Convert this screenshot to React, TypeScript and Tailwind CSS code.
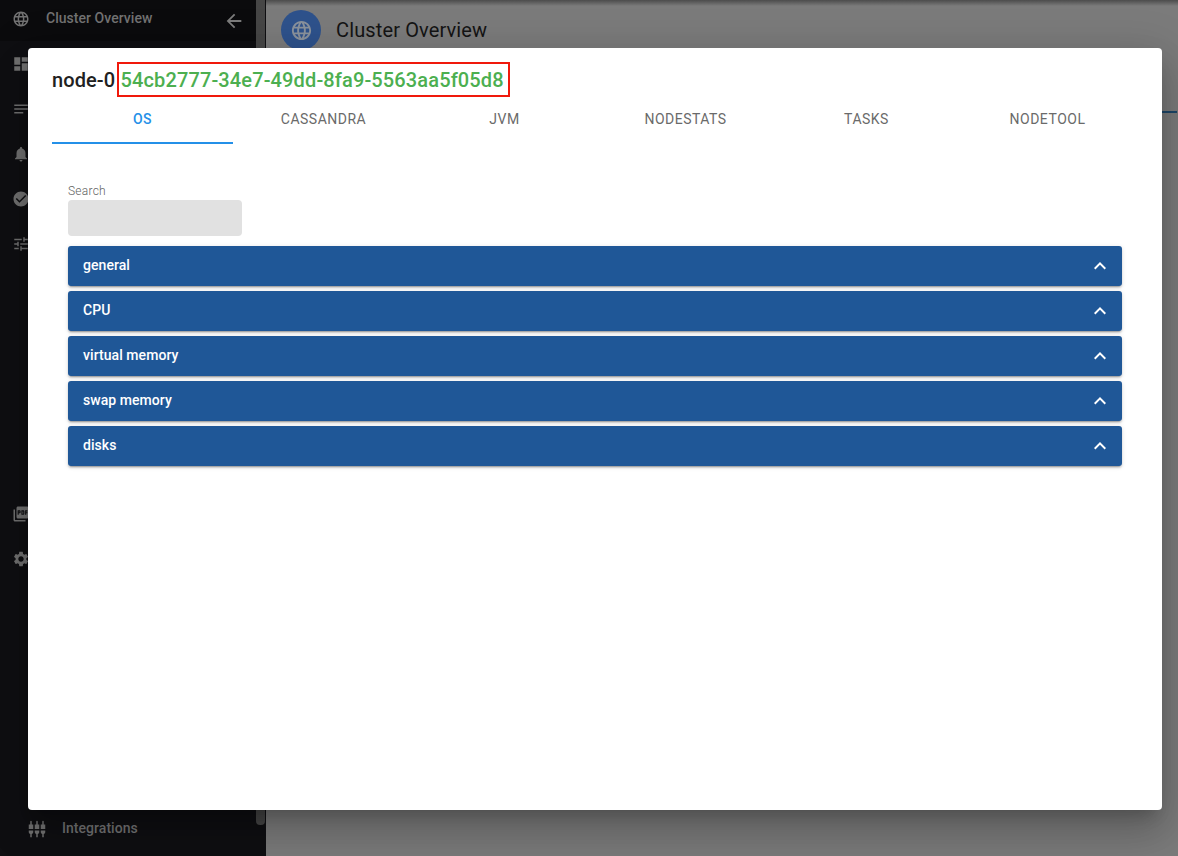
import React from "react";
import type { IconType } from "react-icons";
import {
  MdArrowBack,
  MdCheckCircle,
  MdDashboard,
  MdExpandLess,
  MdLanguage,
  MdNotes,
  MdNotifications,
  MdPictureAsPdf,
  MdSettings,
  MdSettingsInputComponent,
  MdTune,
} from "react-icons/md";

const topItems: IconType[] = [MdDashboard, MdNotes, MdNotifications, MdCheckCircle, MdTune];
const lowerItems: IconType[] = [MdPictureAsPdf, MdSettings];
const tabs = ["OS", "CASSANDRA", "JVM", "NODESTATS", "TASKS", "NODETOOL"];
const sections = ["general", "CPU", "virtual memory", "swap memory", "disks"];

function NavIcon({ icon: Icon }: { icon: IconType }) {
  return (
    <div className="flex h-[45px] items-center pl-3">
      <Icon size={18} />
    </div>
  );
}

function Sidebar() {
  return (
    <aside className="flex h-full w-[266px] shrink-0 bg-[#0f0f12] text-[#727272]">
      <nav className="flex w-64 flex-col">
        <div className="flex h-[41px] items-start bg-[#0b0b0d] pl-3">
          <MdLanguage size={18} className="mt-[10px]" />
          <span className="ml-4 mt-2 text-sm leading-5 font-medium tracking-[0.04px]">Cluster Overview</span>
          <MdArrowBack size={22} className="mt-[10px] mr-[11px] ml-auto text-[#7c7c7c]" />
        </div>
        {topItems.map((icon, i) => (
          <NavIcon key={i} icon={icon} />
        ))}
        <div className="h-[225px]" />
        {lowerItems.map((icon, i) => (
          <NavIcon key={i} icon={icon} />
        ))}
        <div className="mt-[225px] flex h-[45px] items-center pl-7">
          <MdSettingsInputComponent size={18} />
          <span className="ml-4 pb-0.5 text-sm leading-5 font-medium tracking-[0.04px]">Integrations</span>
        </div>
      </nav>
      <div className="h-[825px] w-[9px] rounded-b-[4px] bg-[#464646]" />
    </aside>
  );
}

function Background() {
  return (
    <main className="flex grow flex-col bg-[#7b7b7b] bg-linear-to-b from-[#4c4c4c] to-[#7b7b7b] to-[6px]">
      <div className="flex h-[111px] items-start pl-[15px]">
        <div className="mt-[10px] flex size-10 items-center justify-center rounded-full bg-[#2e528c]">
          <MdLanguage size={23} className="text-[#8a929c]" />
        </div>
        <h1 className="mt-4 ml-[15px] text-xl leading-7 tracking-[0.13px] text-[#141414]">Cluster Overview</h1>
      </div>
      <div className="mr-px h-0.5 bg-[#1d4668]" />
    </main>
  );
}

function Dialog() {
  return (
    <div className="absolute top-12 left-7 flex h-[762px] w-[1134px] flex-col rounded bg-white px-6 shadow-[0_11px_15px_-7px_rgba(0,0,0,0.2),0_24px_38px_3px_rgba(0,0,0,0.14),0_9px_46px_8px_rgba(0,0,0,0.12)]">
      <div className="mt-[14px] flex h-[35px] items-center text-xl font-medium text-[#212121]">
        <span className="w-[65px] tracking-[0.1px]">node-0</span>
        <span className="flex h-[35px] w-[393px] items-center border-2 border-[#f0190c] pl-[1.5px] tracking-[0.13px] whitespace-nowrap text-[#4caf50]">
          54cb2777-34e7-49dd-8fa9-5563aa5f05d8
        </span>
      </div>
      <div className="flex h-[47px]">
        {tabs.map((tab, i) => (
          <div
            key={tab}
            className={
              i === 0
                ? "flex w-[181px] items-start justify-center border-b-2 border-[#2490e8] pt-3 text-sm leading-[21px] font-medium tracking-[0.4px] text-[#2490e8]"
                : "flex w-[181px] items-start justify-center pt-3 text-sm leading-[21px] tracking-[0.5px] text-[#6a6a6a]"
            }
          >
            {tab}
          </div>
        ))}
      </div>
      <div className="flex flex-col px-4 pt-[39px]">
        <label className="text-xs leading-4 font-light tracking-[0.25px] text-[#5f5f5f]">Search</label>
        <div className="mt-px h-9 w-[174px] rounded bg-[#e1e1e1]" />
        <div className="mt-[10px] flex flex-col gap-[5px]">
          {sections.map((section) => (
            <div
              key={section}
              className="flex h-10 items-center rounded-[3px] bg-[#1f5797] pr-[10px] pl-[15px] shadow-[0_3px_1px_-2px_rgba(0,0,0,0.2),0_2px_2px_0_rgba(0,0,0,0.14),0_1px_5px_0_rgba(0,0,0,0.12)]"
            >
              <span className="pb-0.5 text-sm leading-5 font-medium tracking-[0.06px] text-white">{section}</span>
              <MdExpandLess size={24} className="ml-auto text-white" />
            </div>
          ))}
        </div>
      </div>
    </div>
  );
}

export default function App() {
  return (
    <div className="relative flex h-[856px] w-[1178px] overflow-hidden font-[Roboto,sans-serif]">
      <Sidebar />
      <Background />
      <Dialog />
    </div>
  );
}
